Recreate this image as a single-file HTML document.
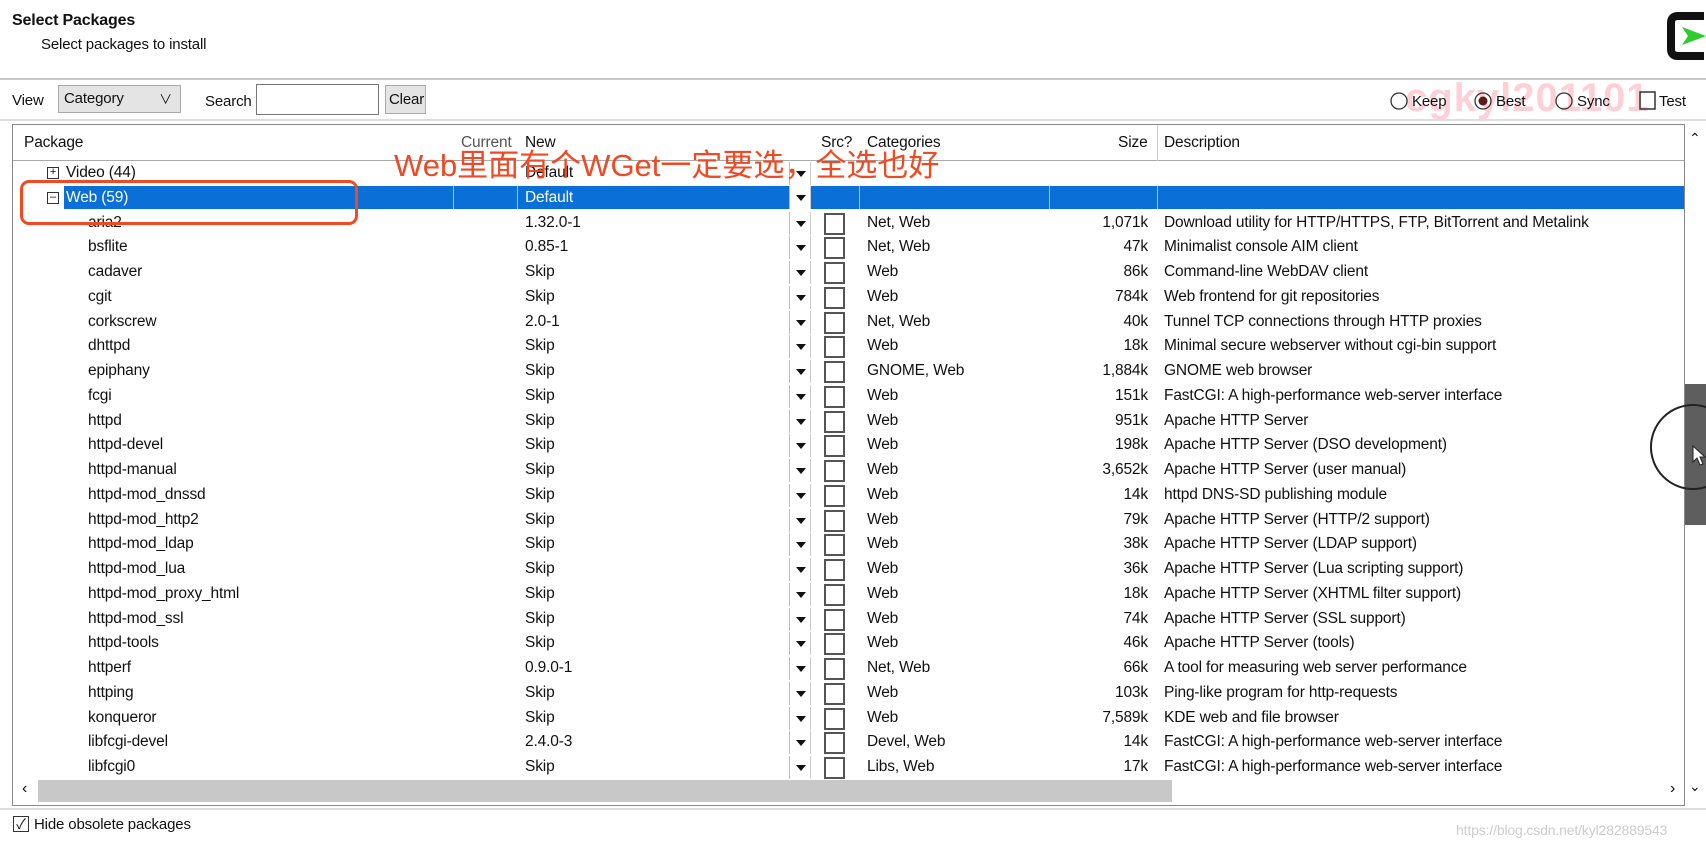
<!DOCTYPE html>
<html><head><meta charset="utf-8"><style>
*{margin:0;padding:0;box-sizing:border-box}
body{width:1706px;height:850px;background:#fff;position:relative;overflow:hidden;font-family:"Liberation Sans","Noto Sans CJK SC",sans-serif;font-size:15.5px;color:#111;letter-spacing:-0.15px}
.a{position:absolute;white-space:nowrap}
.r{position:absolute;left:0;width:1706px;height:25px}
.r .a{top:3px}
.dd{position:absolute;left:789px;top:1px;width:22px;height:23px;border-left:1px solid #bbb;border-right:1px solid #ccc;background:#fff}
.dd:after{content:"";position:absolute;left:6px;top:9px;border-left:5px solid transparent;border-right:5px solid transparent;border-top:6px solid #111}
.cb{position:absolute;left:824px;top:2px;width:21px;height:22px;border:2px solid #555;background:#fff}
.sz{text-align:right;width:120px;left:1028px}
</style></head><body>
<div class="a" style="left:12px;top:12px;font-weight:bold;font-size:16px">Select Packages</div>
<div class="a" style="left:41px;top:36px;font-size:15px">Select packages to install</div>
<svg class="a" style="left:1666px;top:12px" width="40" height="48"><path d="M38 4 H12 Q5 4 5 11 V37 Q5 44 12 44 H38" fill="none" stroke="#111" stroke-width="8"/><path d="M16 15 L40 24 L16 33 L22 24Z" fill="#2ecc2e"/></svg>
<div class="a" style="left:0;top:78px;width:1706px;height:2px;background:#c8c8c8"></div>
<div class="a" style="left:12px;top:92px;font-size:15px">View</div>
<div class="a" style="left:58px;top:85px;width:123px;height:28px;border:1px solid #aaa;background:#e4e4e4;padding:4px 5px;font-size:15px">Category<span style="position:absolute;right:8px;top:3px;font-size:13px">&#8744;</span></div>
<div class="a" style="left:205px;top:93px;font-size:15px">Search</div>
<div class="a" style="left:256px;top:84px;width:123px;height:31px;border:1px solid #777;background:#fff"></div>
<div class="a" style="left:385px;top:85px;width:41px;height:29px;border:1px solid #aaa;background:#e4e4e4;padding:5px 3px;font-size:15px">Clear</div>
<div class="a" style="left:1405px;top:76px;font-size:40px;font-weight:bold;color:rgba(250,120,140,.35);letter-spacing:1px">cgkyl201101</div>
<svg class="a" style="left:1389px;top:90px" width="300" height="22"><circle cx="10" cy="11" r="8" fill="none" stroke="#333" stroke-width="1.3"/><circle cx="94" cy="11" r="8" fill="none" stroke="#333" stroke-width="1.3"/><circle cx="94" cy="11" r="4.5" fill="#5a1a1a"/><circle cx="175" cy="11" r="8" fill="none" stroke="#333" stroke-width="1.3"/><rect x="251" y="2" width="15" height="17" fill="none" stroke="#333" stroke-width="1.5"/></svg>
<div class="a" style="left:1412px;top:93px;font-size:15px">Keep</div>
<div class="a" style="left:1496px;top:93px;font-size:15px">Best</div>
<div class="a" style="left:1577px;top:93px;font-size:15px">Sync</div>
<div class="a" style="left:1659px;top:93px;font-size:15px">Test</div>
<div class="a" style="left:0;top:119px;width:1706px;height:2px;background:#ddd"></div>
<div class="a" style="left:12px;top:124px;width:1673px;height:682px;border:1px solid #888"></div>
<div class="a" style="left:13px;top:125px;width:1671px;height:36px;border-bottom:1px solid #aaa"></div>
<div class="a" style="left:24px;top:134px">Package</div>
<div class="a" style="left:461px;top:134px;color:#555">Current</div>
<div class="a" style="left:525px;top:134px">New</div>
<div class="a" style="left:821px;top:134px">Src?</div>
<div class="a" style="left:867px;top:134px">Categories</div>
<div class="a" style="left:1118px;top:134px">Size</div>
<div class="a" style="left:1164px;top:134px">Description</div>
<div class="a" style="left:1157px;top:125px;width:1px;height:36px;background:#ccc"></div>
<div class="a" style="left:1689px;top:130px;font-size:14px">&#8963;</div>
<div class="a" style="left:1689px;top:778px;font-size:14px">&#8964;</div>
<div class="a" style="left:1685px;top:384px;width:21px;height:141px;background:#5e5e5e"></div>
<div class="a" style="left:1650px;top:404px;width:86px;height:86px;border:2px solid #222;border-radius:50%"></div>
<svg class="a" style="left:1692px;top:445px" width="14" height="22"><path d="M1 1 L1 17 L5 13 L8 20 L11 19 L8 12 L13 12Z" fill="#fff" stroke="#222"/></svg>
<div class="a" style="left:38px;top:780px;width:1134px;height:22px;background:#c8c8c8"></div>
<div class="a" style="left:22px;top:780px;font-size:16px">&#8249;</div>
<div class="a" style="left:1670px;top:780px;font-size:16px">&#8250;</div>

<div class="r" style="top:161px"><div class="a" style="left:47px;top:6px;width:12px;height:12px;border:1px solid #333;font-size:11px;line-height:9px;text-align:center">+</div><div class="a" style="left:66px">Video (44)</div><div class="a" style="left:525px">Default</div><div class="dd"></div></div>
<div class="r" style="top:186px;height:24px"><div class="a" style="left:64px;top:0;width:1620px;height:23px;background:#0a6fd6"></div><div class="a" style="left:453px;top:0;width:1px;height:23px;background:#9cc8f0"></div><div class="a" style="left:517px;top:0;width:1px;height:23px;background:#9cc8f0"></div><div class="a" style="left:859px;top:0;width:1px;height:23px;background:#9cc8f0"></div><div class="a" style="left:1049px;top:0;width:1px;height:23px;background:#9cc8f0"></div><div class="a" style="left:1157px;top:0;width:1px;height:23px;background:#9cc8f0"></div><div class="a" style="left:47px;top:6px;width:12px;height:12px;border:1px solid #333;font-size:11px;line-height:9px;text-align:center">&#8211;</div><div class="a" style="left:66px;color:#fff">Web (59)</div><div class="a" style="left:525px;color:#fff">Default</div><div class="dd" style="top:0"></div></div>

<div class="r" style="top:210.5px"><div class="a" style="left:88px">aria2</div><div class="a" style="left:525px">1.32.0-1</div><div class="dd"></div><div class="cb"></div><div class="a" style="left:867px">Net, Web</div><div class="a sz">1,071k</div><div class="a" style="left:1164px">Download utility for HTTP/HTTPS, FTP, BitTorrent and Metalink</div></div>
<div class="r" style="top:235.25px"><div class="a" style="left:88px">bsflite</div><div class="a" style="left:525px">0.85-1</div><div class="dd"></div><div class="cb"></div><div class="a" style="left:867px">Net, Web</div><div class="a sz">47k</div><div class="a" style="left:1164px">Minimalist console AIM client</div></div>
<div class="r" style="top:260px"><div class="a" style="left:88px">cadaver</div><div class="a" style="left:525px">Skip</div><div class="dd"></div><div class="cb"></div><div class="a" style="left:867px">Web</div><div class="a sz">86k</div><div class="a" style="left:1164px">Command-line WebDAV client</div></div>
<div class="r" style="top:284.75px"><div class="a" style="left:88px">cgit</div><div class="a" style="left:525px">Skip</div><div class="dd"></div><div class="cb"></div><div class="a" style="left:867px">Web</div><div class="a sz">784k</div><div class="a" style="left:1164px">Web frontend for git repositories</div></div>
<div class="r" style="top:309.5px"><div class="a" style="left:88px">corkscrew</div><div class="a" style="left:525px">2.0-1</div><div class="dd"></div><div class="cb"></div><div class="a" style="left:867px">Net, Web</div><div class="a sz">40k</div><div class="a" style="left:1164px">Tunnel TCP connections through HTTP proxies</div></div>
<div class="r" style="top:334.25px"><div class="a" style="left:88px">dhttpd</div><div class="a" style="left:525px">Skip</div><div class="dd"></div><div class="cb"></div><div class="a" style="left:867px">Web</div><div class="a sz">18k</div><div class="a" style="left:1164px">Minimal secure webserver without cgi-bin support</div></div>
<div class="r" style="top:359px"><div class="a" style="left:88px">epiphany</div><div class="a" style="left:525px">Skip</div><div class="dd"></div><div class="cb"></div><div class="a" style="left:867px">GNOME, Web</div><div class="a sz">1,884k</div><div class="a" style="left:1164px">GNOME web browser</div></div>
<div class="r" style="top:383.75px"><div class="a" style="left:88px">fcgi</div><div class="a" style="left:525px">Skip</div><div class="dd"></div><div class="cb"></div><div class="a" style="left:867px">Web</div><div class="a sz">151k</div><div class="a" style="left:1164px">FastCGI: A high-performance web-server interface</div></div>
<div class="r" style="top:408.5px"><div class="a" style="left:88px">httpd</div><div class="a" style="left:525px">Skip</div><div class="dd"></div><div class="cb"></div><div class="a" style="left:867px">Web</div><div class="a sz">951k</div><div class="a" style="left:1164px">Apache HTTP Server</div></div>
<div class="r" style="top:433.25px"><div class="a" style="left:88px">httpd-devel</div><div class="a" style="left:525px">Skip</div><div class="dd"></div><div class="cb"></div><div class="a" style="left:867px">Web</div><div class="a sz">198k</div><div class="a" style="left:1164px">Apache HTTP Server (DSO development)</div></div>
<div class="r" style="top:458px"><div class="a" style="left:88px">httpd-manual</div><div class="a" style="left:525px">Skip</div><div class="dd"></div><div class="cb"></div><div class="a" style="left:867px">Web</div><div class="a sz">3,652k</div><div class="a" style="left:1164px">Apache HTTP Server (user manual)</div></div>
<div class="r" style="top:482.75px"><div class="a" style="left:88px">httpd-mod_dnssd</div><div class="a" style="left:525px">Skip</div><div class="dd"></div><div class="cb"></div><div class="a" style="left:867px">Web</div><div class="a sz">14k</div><div class="a" style="left:1164px">httpd DNS-SD publishing module</div></div>
<div class="r" style="top:507.5px"><div class="a" style="left:88px">httpd-mod_http2</div><div class="a" style="left:525px">Skip</div><div class="dd"></div><div class="cb"></div><div class="a" style="left:867px">Web</div><div class="a sz">79k</div><div class="a" style="left:1164px">Apache HTTP Server (HTTP/2 support)</div></div>
<div class="r" style="top:532.25px"><div class="a" style="left:88px">httpd-mod_ldap</div><div class="a" style="left:525px">Skip</div><div class="dd"></div><div class="cb"></div><div class="a" style="left:867px">Web</div><div class="a sz">38k</div><div class="a" style="left:1164px">Apache HTTP Server (LDAP support)</div></div>
<div class="r" style="top:557px"><div class="a" style="left:88px">httpd-mod_lua</div><div class="a" style="left:525px">Skip</div><div class="dd"></div><div class="cb"></div><div class="a" style="left:867px">Web</div><div class="a sz">36k</div><div class="a" style="left:1164px">Apache HTTP Server (Lua scripting support)</div></div>
<div class="r" style="top:581.75px"><div class="a" style="left:88px">httpd-mod_proxy_html</div><div class="a" style="left:525px">Skip</div><div class="dd"></div><div class="cb"></div><div class="a" style="left:867px">Web</div><div class="a sz">18k</div><div class="a" style="left:1164px">Apache HTTP Server (XHTML filter support)</div></div>
<div class="r" style="top:606.5px"><div class="a" style="left:88px">httpd-mod_ssl</div><div class="a" style="left:525px">Skip</div><div class="dd"></div><div class="cb"></div><div class="a" style="left:867px">Web</div><div class="a sz">74k</div><div class="a" style="left:1164px">Apache HTTP Server (SSL support)</div></div>
<div class="r" style="top:631.25px"><div class="a" style="left:88px">httpd-tools</div><div class="a" style="left:525px">Skip</div><div class="dd"></div><div class="cb"></div><div class="a" style="left:867px">Web</div><div class="a sz">46k</div><div class="a" style="left:1164px">Apache HTTP Server (tools)</div></div>
<div class="r" style="top:656px"><div class="a" style="left:88px">httperf</div><div class="a" style="left:525px">0.9.0-1</div><div class="dd"></div><div class="cb"></div><div class="a" style="left:867px">Net, Web</div><div class="a sz">66k</div><div class="a" style="left:1164px">A tool for measuring web server performance</div></div>
<div class="r" style="top:680.75px"><div class="a" style="left:88px">httping</div><div class="a" style="left:525px">Skip</div><div class="dd"></div><div class="cb"></div><div class="a" style="left:867px">Web</div><div class="a sz">103k</div><div class="a" style="left:1164px">Ping-like program for http-requests</div></div>
<div class="r" style="top:705.5px"><div class="a" style="left:88px">konqueror</div><div class="a" style="left:525px">Skip</div><div class="dd"></div><div class="cb"></div><div class="a" style="left:867px">Web</div><div class="a sz">7,589k</div><div class="a" style="left:1164px">KDE web and file browser</div></div>
<div class="r" style="top:730.25px"><div class="a" style="left:88px">libfcgi-devel</div><div class="a" style="left:525px">2.4.0-3</div><div class="dd"></div><div class="cb"></div><div class="a" style="left:867px">Devel, Web</div><div class="a sz">14k</div><div class="a" style="left:1164px">FastCGI: A high-performance web-server interface</div></div>
<div class="r" style="top:755px"><div class="a" style="left:88px">libfcgi0</div><div class="a" style="left:525px">Skip</div><div class="dd"></div><div class="cb"></div><div class="a" style="left:867px">Libs, Web</div><div class="a sz">17k</div><div class="a" style="left:1164px">FastCGI: A high-performance web-server interface</div></div>

<div class="a" style="left:0;top:808px;width:1706px;height:2px;background:#ddd"></div>
<div class="a" style="left:13px;top:816px;width:16px;height:16px;border:1px solid #333;font-size:14px;line-height:14px;text-align:center">&#10003;</div>
<div class="a" style="left:34px;top:816px;font-size:15px">Hide obsolete packages</div>
<div class="a" style="left:1456px;top:822px;font-size:14px;color:#ccc">https://blog.csdn.net/kyl282889543</div>

<div class="a" style="left:20px;top:180px;width:338px;height:45px;border:3px solid #f04a24;border-radius:9px"></div>
<div class="a" style="left:394px;top:140px;font-size:31px;color:#f04a24;letter-spacing:0">Web里面有个WGet一定要选，全选也好</div>
</body></html>
